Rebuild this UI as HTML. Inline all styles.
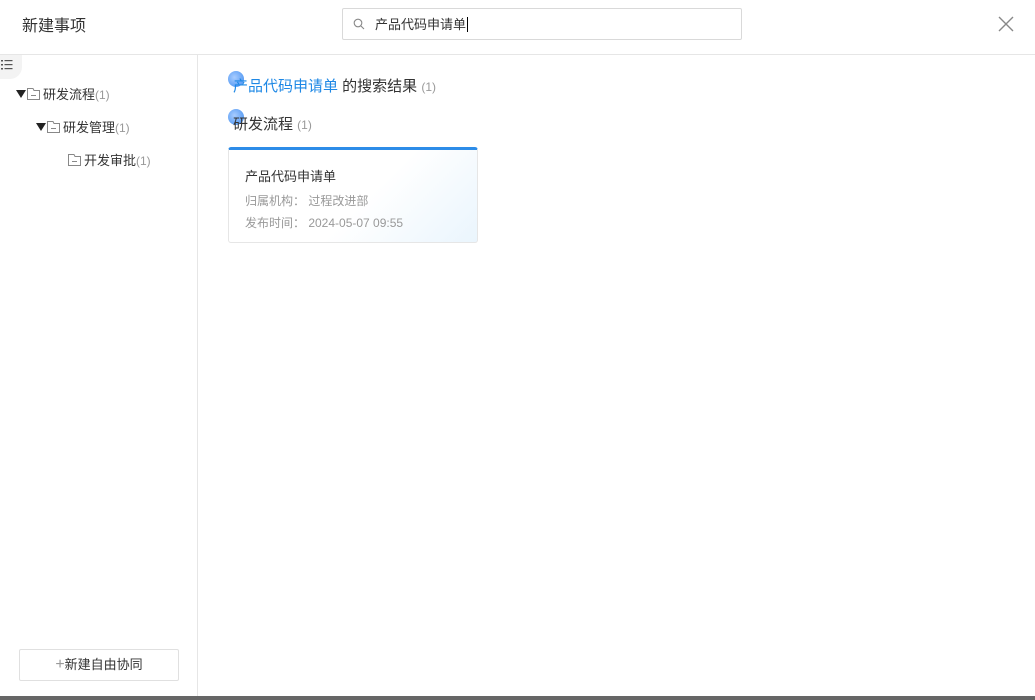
<!DOCTYPE html>
<html><head><meta charset="utf-8"><style>
*{margin:0;padding:0;box-sizing:border-box}
body{width:1035px;height:700px;background:#fff;font-family:"Liberation Sans","Noto Sans CJK SC",sans-serif;position:relative;overflow:hidden;color:#333}
.a{position:absolute;white-space:nowrap}
.g{color:#999}
.fold{display:inline-block;width:13px;height:12px;vertical-align:-1px;margin-right:3px}
.tri{display:inline-block;width:0;height:0;border-left:5px solid transparent;border-right:5px solid transparent;border-top:8px solid #222;margin-right:1px;vertical-align:1px}
.dot{position:absolute;width:16px;height:16px;border-radius:50%;background:radial-gradient(circle at 40% 40%,#a8ccff,#3d8cf0)}
</style></head><body>
<div class="a" style="left:22px;top:12px;font-size:16px;color:#333">新建事项</div>
<div class="a" style="left:342px;top:8px;width:400px;height:32px;border:1px solid #d9d9d9;border-radius:2px"></div>
<svg class="a" style="left:353px;top:18px" width="12" height="12" viewBox="0 0 12 12"><circle cx="5" cy="5" r="3.8" fill="none" stroke="#888" stroke-width="1.1"/><line x1="8" y1="8" x2="11" y2="11" stroke="#888" stroke-width="1.1"/></svg>
<div class="a" style="left:375px;top:14px;font-size:13px;color:#333">产品代码申请单<span style="border-left:1px solid #000;margin-left:1px"></span></div>
<svg class="a" style="left:998px;top:16px" width="16" height="16" viewBox="0 0 16 16"><path d="M1 1L15 15M15 1L1 15" stroke="#888" stroke-width="1.4"/></svg>
<div class="a" style="left:0;top:54px;width:1035px;border-top:1px solid #e6e6e6"></div>
<div class="a" style="left:197px;top:55px;height:645px;border-left:1px solid #e6e6e6"></div>
<div class="a" style="left:-2px;top:55px;width:24px;height:24px;border-radius:0 0 12px 0;background:#f3f3f3"></div>
<svg class="a" style="left:1px;top:59px" width="12" height="12" viewBox="0 0 12 12"><g fill="#555"><rect x="0" y="1" width="2" height="1.5"/><rect x="0" y="5" width="2" height="1.5"/><rect x="0" y="9" width="2" height="1.5"/><rect x="3.5" y="1" width="8" height="1.2"/><rect x="3.5" y="5" width="8" height="1.2"/><rect x="3.5" y="9" width="8" height="1.2"/></g></svg>
<div class="a" style="left:16px;top:84px;font-size:13px"><span class="tri"></span><svg class="fold" viewBox="0 0 13 12"><path d="M0.5 0.5H6L7 2.5H12.5V11.5H0.5Z M4 7.5H9" fill="none" stroke="#888"/></svg>研发流程<span class="g" style="font-size:12px">(1)</span></div>
<div class="a" style="left:36px;top:117px;font-size:13px"><span class="tri"></span><svg class="fold" viewBox="0 0 13 12"><path d="M0.5 0.5H6L7 2.5H12.5V11.5H0.5Z M4 7.5H9" fill="none" stroke="#888"/></svg>研发管理<span class="g" style="font-size:12px">(1)</span></div>
<div class="a" style="left:68px;top:150px;font-size:13px"><svg class="fold" viewBox="0 0 13 12"><path d="M0.5 0.5H6L7 2.5H12.5V11.5H0.5Z M4 7.5H9" fill="none" stroke="#888"/></svg>开发审批<span class="g" style="font-size:12px">(1)</span></div>
<div class="a" style="left:19px;top:649px;width:160px;height:32px;border:1px solid #e0e0e0;border-radius:2px;text-align:center;line-height:30px;font-size:13px;color:#333"><span class="g" style="font-size:16px">+</span>新建自由协同</div>
<div class="a" style="left:0;top:696px;width:1035px;height:4px;background:#666"></div>
<div class="dot" style="left:228px;top:71px"></div>
<div class="a" style="left:233px;top:75px;font-size:15px"><span style="color:#1e88e5">产品代码申请单</span> 的搜索结果 <span class="g" style="font-size:12px">(1)</span></div>
<div class="dot" style="left:228px;top:109px"></div>
<div class="a" style="left:233px;top:113px;font-size:15px">研发流程 <span class="g" style="font-size:12px">(1)</span></div>
<div class="a" style="left:228px;top:147px;width:250px;height:96px;border:1px solid #e6e6e6;border-top:3px solid #2d8ce8;border-radius:3px;background:linear-gradient(135deg,#fff 55%,#eaf5fd)"></div>
<div class="a" style="left:245px;top:166px;font-size:13px;color:#333">产品代码申请单</div>
<div class="a" style="left:245px;top:192px;font-size:12px;color:#999">归属机构：&nbsp;过程改进部</div>
<div class="a" style="left:245px;top:214px;font-size:12px;color:#999">发布时间：&nbsp;2024-05-07 09:55</div>
</body></html>
